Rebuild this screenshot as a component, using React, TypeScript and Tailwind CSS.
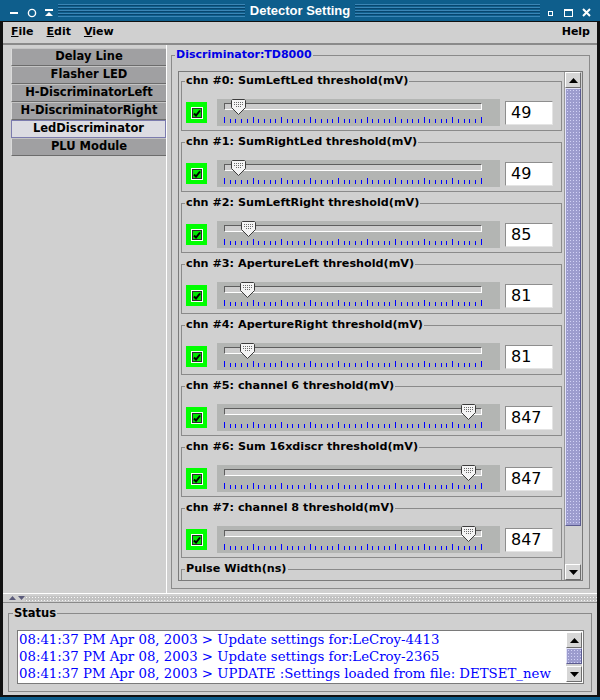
import React from "react";

const channels: [string, number][] = [
  ["chn #0: SumLeftLed threshold(mV)", 49],
  ["chn #1: SumRightLed threshold(mV)", 49],
  ["chn #2: SumLeftRight threshold(mV)", 85],
  ["chn #3: ApertureLeft threshold(mV)", 81],
  ["chn #4: ApertureRight threshold(mV)", 81],
  ["chn #5: channel 6 threshold(mV)", 847],
  ["chn #6: Sum 16xdiscr threshold(mV)", 847],
  ["chn #7: channel 8 threshold(mV)", 847],
];

const tabs = [
  "Delay Line",
  "Flasher LED",
  "H-DiscriminatorLeft",
  "H-DiscriminatorRight",
  "LedDiscriminator",
  "PLU Module",
];

const logLines = [
  "08:41:37 PM Apr 08, 2003 > Update settings for:LeCroy-4413",
  "08:41:37 PM Apr 08, 2003 > Update settings for:LeCroy-2365",
  "08:41:37 PM Apr 08, 2003 > UPDATE :Settings loaded from file: DETSET_new",
];

function Stripes({ className }: { className: string }) {
  return (
    <div
      className={`h-[13px] bg-[repeating-linear-gradient(to_bottom,#3b86b6_0px,#3b86b6_1px,#08466e_1px,#08466e_2px,#0e5e8c_2px,#0e5e8c_3px)] ${className}`}
    />
  );
}

function TitleBar() {
  return (
    <div className="flex h-[22px] items-center border-b border-[#101010] bg-[#0e5e8c] text-white">
      <svg width="58" height="22" viewBox="0 0 58 22" className="shrink-0">
        <rect x="10" y="12" width="8" height="2" fill="#fff" />
        <circle cx="32" cy="13" r="3.6" fill="none" stroke="#fff" strokeWidth="1.4" />
        <rect x="45" y="9" width="8" height="2" fill="#fff" />
        <path d="M45 16 L49 12 L53 16 Z" fill="#fff" />
      </svg>
      <Stripes className="w-[187px]" />
      <div className="w-[110px] text-center font-['Liberation_Sans',sans-serif] text-[13px] font-bold leading-none">
        Detector Setting
      </div>
      <Stripes className="w-[185px]" />
      <svg width="60" height="22" viewBox="0 0 60 22" className="shrink-0">
        <rect x="8.5" y="11.5" width="4" height="4" fill="none" stroke="#fff" />
        <rect x="24.5" y="9.5" width="8" height="7" fill="none" stroke="#fff" />
        <rect x="24" y="9" width="9" height="2" fill="#fff" />
        <path d="M43 9 L50 16 M50 9 L43 16" stroke="#fff" strokeWidth="2" />
      </svg>
    </div>
  );
}

function Arrow({ up }: { up?: boolean }) {
  return (
    <div className="flex h-[16px] w-[16px] shrink-0 items-center justify-center border border-b-[#6e6e6e] border-l-white border-r-[#6e6e6e] border-t-white bg-[#d6d6d6]">
      <svg width="9" height="5" viewBox="0 0 9 5">
        <path d={up ? "M0 5 L4.5 0 L9 5 Z" : "M0 0 L9 0 L4.5 5 Z"} fill="#000" />
      </svg>
    </div>
  );
}

function Thumb() {
  const dots = [];
  for (let y = 3; y <= 7; y += 2) {
    for (let x = y === 7 ? 5 : 3; x <= (y === 7 ? 10 : 12); x += 2) {
      dots.push(<rect key={`${x}-${y}`} x={x} y={y} width="1" height="1" fill="#6a6a6a" />);
    }
  }
  return (
    <svg width="15" height="17" viewBox="0 0 15 17">
      <path
        d="M1.5 0.5 H13.5 L14.5 1.5 V8.5 L7.5 15.5 L0.5 8.5 V1.5 Z"
        fill="#f4f4f4"
        stroke="#3c3c3c"
      />
      {dots}
    </svg>
  );
}

function Slider({ value }: { value: number }) {
  const left = 7 + value * 0.2883 - 7.5;
  return (
    <div className="relative ml-[10px] h-[27px] w-[283px] bg-[#b3b5b3] pt-[4px]">
      <div className="ml-[7px] h-[7px] w-[258px] border border-b-white border-l-[#5e5e5e] border-r-white border-t-[#5e5e5e] bg-[#cdcdcd]" />
      <div className="ml-[7px] mt-[7px] flex h-[6px] w-[258px] items-end justify-between">
        {Array.from({ length: 46 }, (_, i) => (
          <div
            key={i}
            className={i % 5 === 0 ? "h-[6px] w-px bg-[#0000ff]" : "h-[4px] w-px bg-[#0000ff]"}
          />
        ))}
      </div>
      <div className="absolute top-0" style={{ left: `${left}px` }}>
        <Thumb />
      </div>
    </div>
  );
}

function CheckBox() {
  return (
    <div className="flex h-[21px] w-[21px] shrink-0 items-center justify-center bg-[#00ff00]">
      <div className="border border-white">
        <div className="flex h-[10px] w-[10px] items-center justify-center border border-[#2a2a2a] bg-[#00e600]">
          <svg width="8" height="8" viewBox="0 0 8 8">
            <path d="M1 4.5 L3 6.5 L7 1.5" fill="none" stroke="#000" strokeWidth="2" />
          </svg>
        </div>
      </div>
    </div>
  );
}

function Channel({ label, value }: { label: string; value: number }) {
  return (
    <fieldset className="ml-[2px] w-[381px] shrink-0 border border-[#8a8a8a]">
      <legend className="ml-[3px] px-px text-[11.2px] font-bold leading-[14px] text-black">
        {label}
      </legend>
      <div className="flex items-center pb-[4px] pl-[4px] pt-[11px]">
        <CheckBox />
        <Slider value={value} />
        <div className="ml-[5px] flex h-[24px] w-[48px] items-center border border-b-[#e4e4e4] border-l-[#8e8e8e] border-r-[#e4e4e4] border-t-[#8e8e8e] bg-white pl-[5px] font-['DejaVu_Sans',sans-serif] text-[16px] text-black">
          {value}
        </div>
      </div>
    </fieldset>
  );
}

export default function App() {
  return (
    <div className="flex h-[700px] w-[600px] flex-col bg-[#0e5e8c] font-['DejaVu_Sans',sans-serif]">
      <TitleBar />
      <div className="flex h-[675px] flex-col border-x-[3px] border-b-2 border-[#111] bg-[#d0d0d0]">
        {/* menu */}
        <div className="flex h-[23px] items-center border-b-2 border-[#8a8a8a] pl-[8px] pr-[7px] text-[11px] font-bold text-black">
          <span className="mr-[13px]">
            <span className="underline">F</span>ile
          </span>
          <span className="mr-[13px]">
            <span className="underline">E</span>dit
          </span>
          <span>
            <span className="underline">V</span>iew
          </span>
          <span className="ml-auto">Help</span>
        </div>

        <div className="flex h-[548px]">
          {/* tabs */}
          <div className="w-[163px] shrink-0 pl-[8px] pt-[3px]">
            {tabs.map((t) =>
              t === "LedDiscriminator" ? (
                <div
                  key={t}
                  className="flex h-[18px] w-[155px] items-center justify-center border border-[#7c7cae] bg-[#dcdce2] text-[11.5px] font-bold text-black"
                >
                  {t}
                </div>
              ) : (
                <div
                  key={t}
                  className="flex h-[18px] w-[155px] items-center justify-center border-b border-l border-t border-b-[#6c6c6c] border-l-[#dadada] border-t-[#c4c4c4] bg-[#a0a0a2] text-[11.5px] font-bold text-black"
                >
                  {t}
                </div>
              )
            )}
          </div>

          {/* right pane */}
          <div className="flex-1 border-l border-white pb-[4px] pl-[4px] pr-[7px] pt-[3px]">
            <fieldset className="h-[541px] border border-[#8a8a8a]">
              <legend className="ml-[3px] px-px text-[11px] font-bold leading-[14px] text-[#0000e6]">
                Discriminator:TD8000
              </legend>
              <div className="mx-[6px] mt-[9px] flex h-[510px] border border-[#7a7a7a]">
                <div className="flex w-[385px] flex-col gap-[4px] overflow-hidden pt-[2px]">
                  {channels.map(([l, v]) => (
                    <Channel key={l} label={l} value={v} />
                  ))}
                  <fieldset className="ml-[2px] h-[57px] w-[381px] shrink-0 border border-[#8a8a8a]">
                    <legend className="ml-[3px] px-px text-[11.2px] font-bold leading-[14px] text-black">
                      Pulse Width(ns)
                    </legend>
                  </fieldset>
                </div>
                <div className="flex w-[17px] flex-col border-l border-[#9a9a9a] bg-[#d0d0d0]">
                  <Arrow up />
                  <div className="h-[438px] w-[16px] border border-b-[#5c5c90] border-l-[#e4e4f8] border-r-[#5c5c90] border-t-[#e4e4f8] bg-[#9c9cce] bg-[radial-gradient(circle,#d2d2f6_0.6px,transparent_0.9px)] bg-[length:3px_3px]" />
                  <div className="flex-1" />
                  <Arrow />
                </div>
              </div>
            </fieldset>
          </div>
        </div>

        {/* splitter */}
        <div className="flex h-[10px] items-center border-b border-t border-b-[#8a8a8a] border-t-white">
          <div className="flex w-[22px] shrink-0 items-center gap-[2px] pl-[6px]">
            <svg width="7" height="4" viewBox="0 0 7 4">
              <path d="M0 4 L3.5 0 L7 4 Z" fill="#5a5a7a" />
            </svg>
            <svg width="7" height="4" viewBox="0 0 7 4">
              <path d="M0 0 L7 0 L3.5 4 Z" fill="#5a5a7a" />
            </svg>
          </div>
          <div className="h-[5px] flex-1 bg-[#c2c2c2] bg-[radial-gradient(circle,#f6f6f6_0.6px,transparent_0.9px)] bg-[length:3px_3px]" />
        </div>

        {/* status */}
        <div className="pb-[2px] pt-[3px]">
          <fieldset className="mx-[5px] border border-[#8a8a8a]">
            <legend className="ml-[4px] px-px text-[11.5px] font-bold leading-[14px] text-black">
              Status
            </legend>
            <div className="pb-[7px] pl-[8px] pr-[7px] pt-[10px]">
              <div className="flex h-[54px] border border-[#7a7a7a] bg-white">
                <div className="flex-1 overflow-hidden pl-px font-['DejaVu_Serif',serif] text-[13.3px] leading-[17px] text-[#0000ff]">
                  {logLines.map((l) => (
                    <div key={l} className="whitespace-nowrap">
                      {l}
                    </div>
                  ))}
                </div>
                <div className="my-px mr-px flex w-[16px] flex-col">
                  <Arrow up />
                  <div className="h-[16px] border border-b-[#5c5c90] border-l-[#e4e4f8] border-r-[#5c5c90] border-t-[#e4e4f8] bg-[#9c9cce] bg-[radial-gradient(circle,#d2d2f6_0.6px,transparent_0.9px)] bg-[length:3px_3px]" />
                  <div className="flex-1 bg-[#d0d0d0]" />
                  <Arrow />
                </div>
              </div>
            </div>
          </fieldset>
        </div>
      </div>
    </div>
  );
}
